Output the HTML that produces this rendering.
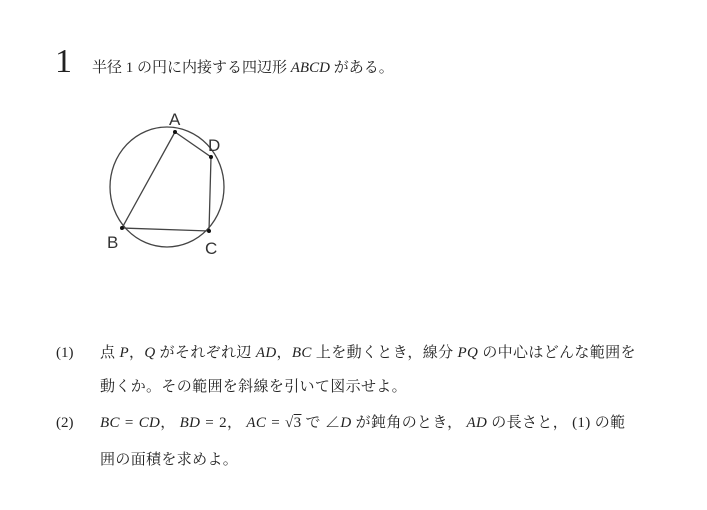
<!DOCTYPE html>
<html><head><meta charset="utf-8"><style>
body{margin:0;width:707px;height:510px;background:#fff;position:relative;overflow:hidden;font-family:"Liberation Serif","Noto Serif CJK SC",serif;color:#222}
.t{position:absolute;white-space:nowrap;font-size:15px;line-height:20px;letter-spacing:0.35px}
i{font-style:italic}
.e{margin:0 5px}
.c{margin-right:4px}
</style></head><body>
<div class="t" style="left:55px;top:42px;font-size:34px;line-height:40px">1</div>
<div class="t" style="left:92px;top:58px;letter-spacing:0">半径 1 の円に内接する四辺形 <i>ABCD</i> がある。</div>
<svg style="position:absolute;left:0;top:0" width="707" height="510">
<g fill="none" stroke="#444" stroke-width="1.3">
<ellipse cx="167" cy="187" rx="57" ry="60"/>
<path d="M175 132 L211 157 L209 231 L122 228 Z"/>
</g>
<g fill="#111"><circle cx="175" cy="132" r="2"/><circle cx="211" cy="157" r="2"/><circle cx="209" cy="231" r="2"/><circle cx="122" cy="228" r="2"/></g>
<g font-family="Liberation Sans,sans-serif" font-size="17" fill="#333">
<text x="169" y="125">A</text><text x="208" y="151">D</text><text x="107" y="248">B</text><text x="205" y="254">C</text>
</g>
</svg>
<div class="t" style="left:56px;top:343px;letter-spacing:0">(1)</div>
<div class="t" style="left:100px;top:343px">点 <i>P</i>，<i>Q</i> がそれぞれ辺 <i>AD</i>，<i>BC</i> 上を動くとき，線分 <i>PQ</i> の中心はどんな範囲を</div>
<div class="t" style="left:100px;top:377px">動くか。その範囲を斜線を引いて図示せよ。</div>
<div class="t" style="left:56px;top:413px;letter-spacing:0">(2)</div>
<div class="t" style="left:100px;top:413px"><i>BC</i><span class="e">=</span><i>CD</i>，<span class="c"></span><i>BD</i><span class="e">=</span>2，<span class="c"></span><i>AC</i><span class="e">=</span>√<span style="text-decoration:overline">3</span> で ∠<i>D</i> が鈍角のとき，<span class="c"></span><i>AD</i> の長さと，<span class="c"></span>(1) の範</div>
<div class="t" style="left:100px;top:450px">囲の面積を求めよ。</div>
</body></html>
